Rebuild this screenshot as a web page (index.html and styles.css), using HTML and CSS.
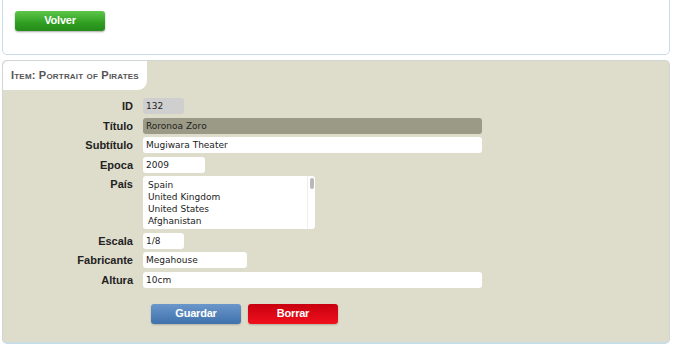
FILE: index.html
```html
<!DOCTYPE html>
<html>
<head>
<meta charset="utf-8">
<link rel="stylesheet" href="styles.css">
</head>
<body>
<div class="top-panel">
  <a class="btn btn-green">Volver</a>
</div>
<div class="item-panel">
  <div class="tab">Item: Portrait of Pirates</div>
  <form class="form">
    <div class="row"><label>ID</label><div class="field w40 gray">132</div></div>
    <div class="row"><label>Título</label><div class="field wfull dark">Roronoa Zoro</div></div>
    <div class="row"><label>Subtítulo</label><div class="field wfull">Mugiwara Theater</div></div>
    <div class="row"><label>Epoca</label><div class="field w62">2009</div></div>
    <div class="row"><label>País</label>
      <div class="listbox">
        <div class="opts">
          <div>Spain</div>
          <div>United Kingdom</div>
          <div>United States</div>
          <div>Afghanistan</div>
        </div>
        <div class="scroll"><div class="thumb"></div></div>
      </div>
    </div>
    <div class="row"><label>Escala</label><div class="field w40">1/8</div></div>
    <div class="row"><label>Fabricante</label><div class="field w104">Megahouse</div></div>
    <div class="row"><label>Altura</label><div class="field wfull">10cm</div></div>
    <div class="actions">
      <a class="btn btn-blue">Guardar</a>
      <a class="btn btn-red">Borrar</a>
    </div>
  </form>
</div>
</body>
</html>
```
FILE: styles.css
```css
html, body {
  margin: 0;
  padding: 0;
  background: #ffffff;
}
body {
  font-family: "Liberation Sans", Arial, sans-serif;
  color: #222;
}
.top-panel {
  margin: -4px 3px 0 2px;
  height: 59px;
  border: 1px solid #c9dbe6;
  border-radius: 0 0 5px 5px;
  background: #fff;
  box-sizing: border-box;
  padding: 13px 0 0 12px;
}
.btn {
  display: inline-flex;
  align-items: center;
  justify-content: center;
  width: 90px;
  height: 20px;
  border-radius: 3px;
  color: #fff;
  font-weight: bold;
  font-size: 11px;
  letter-spacing: -0.2px;
  box-sizing: border-box;
  padding-bottom: 2px;
  cursor: pointer;
}
.btn-green {
  background: linear-gradient(#5dc64a, #2f9e21 60%, #268a1a);
  box-shadow: 0 1px 2px rgba(0,0,0,0.35);
}
.btn-blue {
  background: linear-gradient(#6a97cb, #3f71ab);
  box-shadow: 0 1px 2px rgba(0,0,0,0.2);
}
.btn-red {
  background: linear-gradient(#c8000f, #f0101c);
  box-shadow: 0 1px 2px rgba(0,0,0,0.2);
}
.item-panel {
  margin: 5px 3px 0 2px;
  height: 284px;
  background: #dedcca;
  border: 1px solid #cfd6d4;
  border-bottom: 2px solid #c9dde6;
  border-radius: 5px;
  box-sizing: border-box;
  overflow: hidden;
}
.tab {
  display: inline-block;
  background: #fff;
  width: 144px;
  height: 29px;
  box-sizing: border-box;
  border-radius: 5px 0 9px 0;
  padding: 8px 0 0 8px;
  font-size: 11px;
  font-variant: small-caps;
  font-weight: bold;
  color: #555;
  letter-spacing: 0.2px;
  white-space: nowrap;
}
.form {
  display: flex;
  flex-direction: column;
  gap: 3.5px;
  margin-top: 8px;
}
.row {
  display: flex;
  align-items: flex-start;
  gap: 10px;
}
.row label {
  width: 130px;
  text-align: right;
  font-weight: bold;
  font-size: 11px;
  line-height: 16px;
  color: #222;
}
.field {
  height: 16px;
  box-sizing: border-box;
  background: #fff;
  border-radius: 3px;
  font-family: "DejaVu Sans", Verdana, sans-serif;
  font-size: 9px;
  line-height: 16px;
  padding-left: 3px;
  color: #222;
}
.gray { background: #cfcfcf; }
.dark { background: #9b9a86; }
.w40 { width: 41px; }
.w62 { width: 62px; }
.w104 { width: 104px; }
.wfull { width: 339px; }
.listbox {
  width: 172px;
  height: 53px;
  background: #fff;
  border-radius: 3px;
  display: flex;
  box-sizing: border-box;
  padding: 3px 0 0 5px;
}
.opts {
  flex: 1;
  font-family: "DejaVu Sans", Verdana, sans-serif;
  font-size: 9px;
  line-height: 12px;
  color: #222;
}
.scroll {
  width: 8px;
  border-left: 1px solid #eee;
  margin-top: -3px;
  padding: 2px 0 0 2px;
  box-sizing: border-box;
}
.thumb {
  width: 4px;
  height: 11px;
  border-radius: 2px;
  background: #b9b9b9;
}
.actions {
  display: flex;
  gap: 7px;
  margin: 13px 0 0 148px;
}
```
